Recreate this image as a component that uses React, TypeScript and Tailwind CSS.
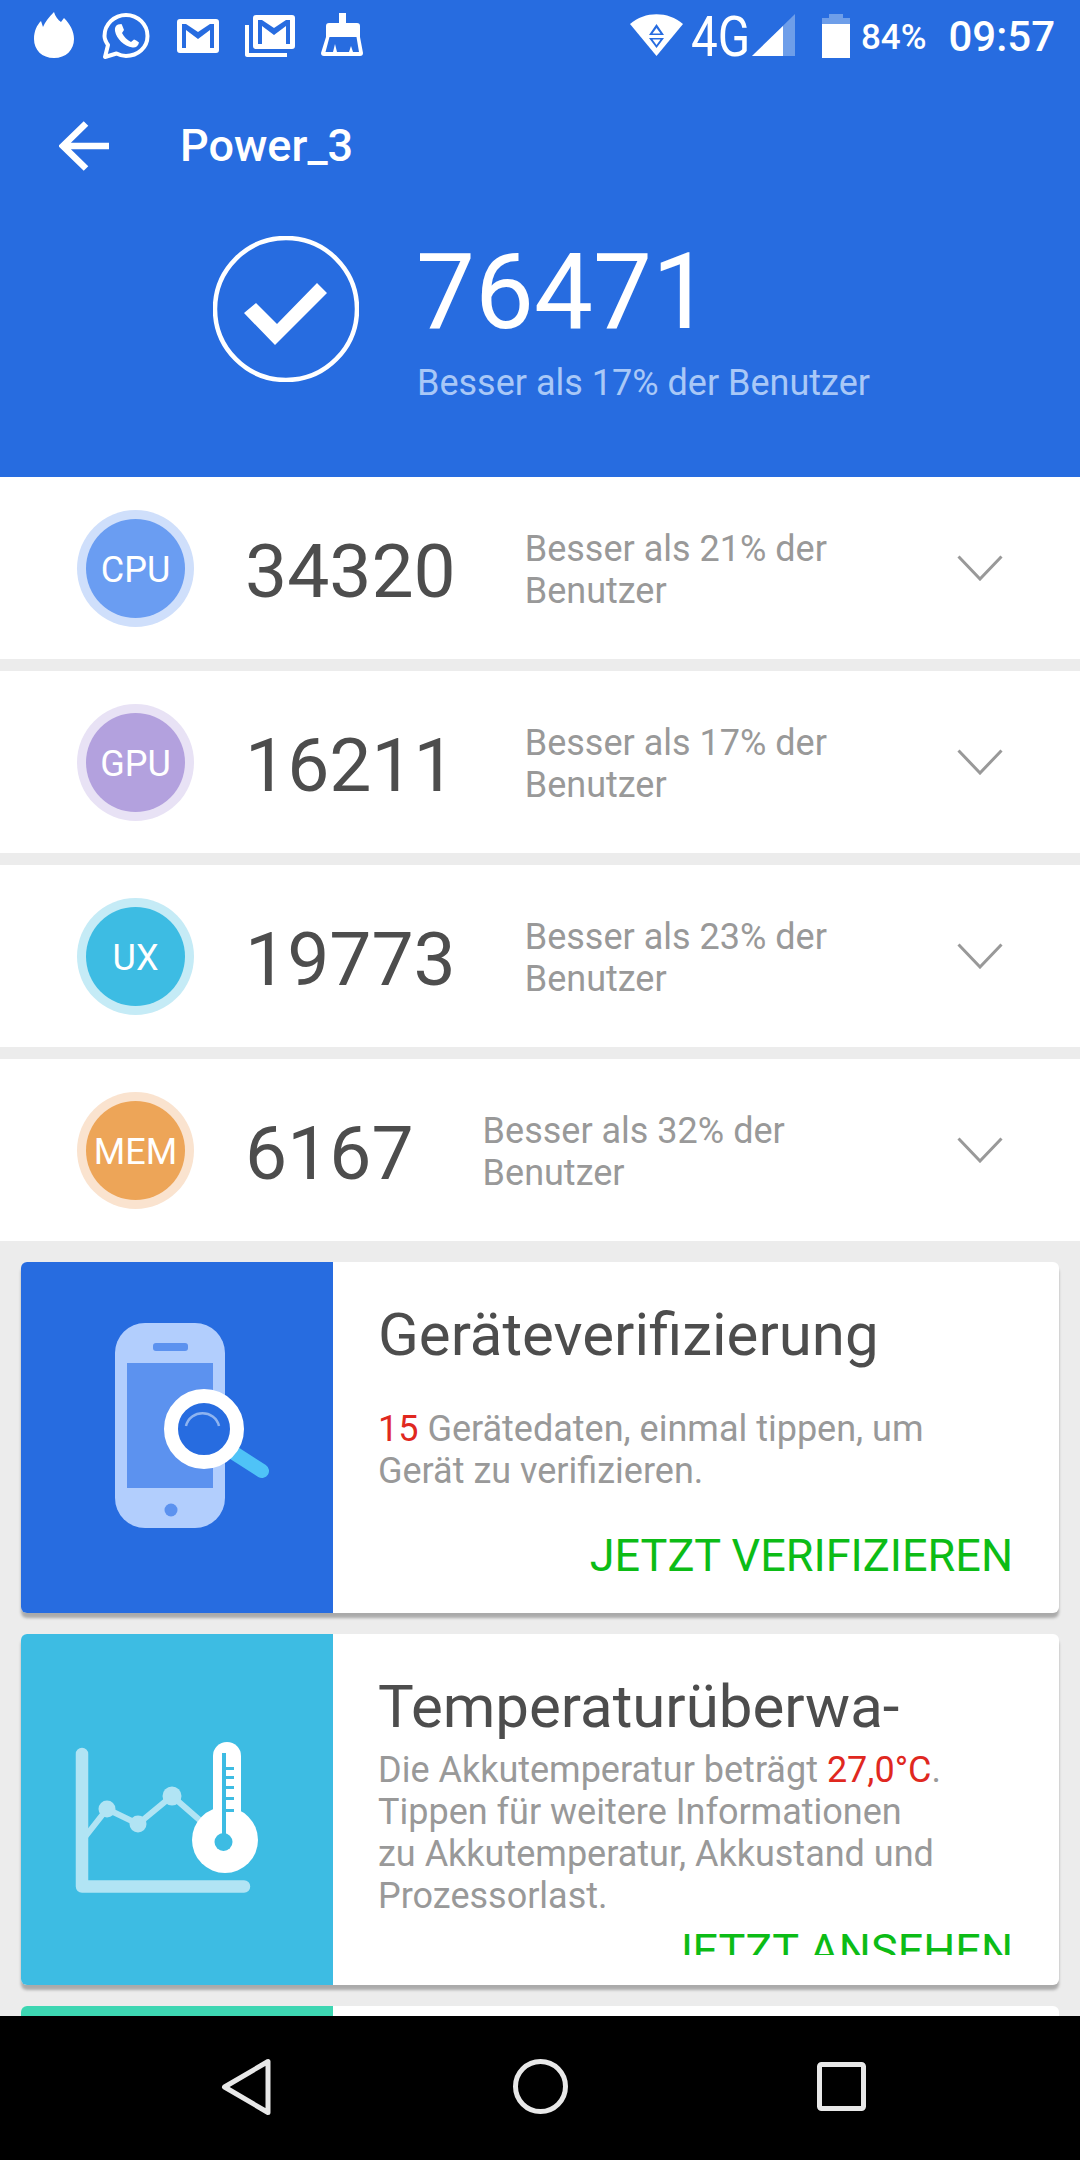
const rows = [
  { label: 'CPU', score: '34320', pct: 21, outer: 'bg-[#cfdffb]', inner: 'bg-[#6a9df2]' },
  { label: 'GPU', score: '16211', pct: 17, outer: 'bg-[#e8e2f5]', inner: 'bg-[#b3a1de]' },
  { label: 'UX', score: '19773', pct: 23, outer: 'bg-[#c5ebf6]', inner: 'bg-[#3dbce3]' },
  { label: 'MEM', score: '6167', pct: 32, outer: 'bg-[#fae3cf]', inner: 'bg-[#eda558]' },
]

function Flame() {
  return (
    <svg width="40" height="46" viewBox="0 0 40 46" fill="white">
      <path d="M20 46C8 46 0 38 0 27C0 19 3 13 7 9L9 15C11 10 15 5 20 0C21 4 24 8 27 10L30 6C36 12 40 19 40 27C40 38 32 46 20 46Z" />
    </svg>
  )
}

function Whatsapp() {
  return (
    <svg width="48" height="48" viewBox="0 0 48 48" fill="none">
      <path d="M3 45L6 33C3.800 29.800 2.500 27 2.500 24C2.500 12.500 12 3 24 3C36 3 45.500 12.500 45.500 24C45.500 35.500 36 44 24 44C20.500 44 17.500 43 14.500 41.500Z" stroke="white" strokeWidth="4" strokeLinejoin="round" />
      <path d="M16 12.500L19.500 12C20.500 14 21.500 16.500 22 18L20 21C22 25 25 28 29 30L32 27.500C33.500 28 36 29.500 37 30.500C36.500 34 33.500 36 30.500 35.500C22 34 14.500 27 13 19C12.500 16 13.500 13.500 16 12.500Z" fill="white" />
    </svg>
  )
}

function Gmail() {
  return (
    <svg width="42" height="34" viewBox="0 0 42 34" fill="white">
      <path fillRule="evenodd" d="M3 0H39C41 0 42 1 42 3V31C42 33 41 34 39 34H3C1 34 0 33 0 31V3C0 1 1 0 3 0ZM5 5V29H9V11L21 20L33 11V29H37V5H33L21 13L9 5Z" />
    </svg>
  )
}

function GmailStack() {
  return (
    <svg width="50" height="42" viewBox="0 0 50 42" fill="white">
      <path fillRule="evenodd" d="M11 0H47C49 0 50 1 50 3V31C50 33 49 34 47 34H11C9 34 8 33 8 31V3C8 1 9 0 11 0ZM13 5V29H17V11L29 20L41 11V29H45V5H41L29 13L17 5Z" />
      <path d="M0 10H4V38H42V42H2C1 42 0 41 0 40Z" />
    </svg>
  )
}

function Broom() {
  return (
    <svg width="42" height="43" viewBox="0 0 42 43" fill="white">
      <path d="M18 0H25V10H36C38 10 39 11 39 13V24L42 40C42 42 41 43 39 43H3C1 43 0 42 0 40L5 24V13C5 11 6 10 8 10H18Z" />
      <path d="M8.500 24H35.500L38 39H32L30 33L28 39H16L14 31L12 39H4.500Z" fill="#276ce0" />
    </svg>
  )
}

function Wifi() {
  return (
    <svg width="53" height="42" viewBox="0 0 53 42" fill="white">
      <path d="M0 10C15 -3 38 -3 53 10L26.500 42Z" />
      <path d="M26.500 10L34 21H19Z M19 24H34L26.500 34Z" fill="#276ce0" />
      <path d="M26.500 14L30.500 19.500H22.500Z M22.500 25.500H30.500L26.500 31Z" fill="white" />
    </svg>
  )
}

function Signal() {
  return (
    <svg width="43" height="42" viewBox="0 0 43 42">
      <path d="M0 42L43 0V42Z" fill="#6e9ee9" />
      <path d="M0 42L31 12V42Z" fill="white" />
    </svg>
  )
}

function Battery() {
  return (
    <svg width="28" height="44" viewBox="0 0 28 44">
      <path d="M7 0H21V4H28V14H0V4H7Z" fill="#6e9ee9" />
      <rect y="10" width="28" height="34" fill="white" />
    </svg>
  )
}

function Chevron() {
  return (
    <svg width="46" height="26" viewBox="0 0 46 26" fill="none">
      <path d="M1.500 1.500L23 24L44.500 1.500" stroke="#999999" strokeWidth="3" />
    </svg>
  )
}

function PhoneArt() {
  return (
    <svg width="312" height="351" viewBox="0 0 312 351" fill="none">
      <rect x="94" y="61" width="110" height="205" rx="30" fill="#b2cefd" />
      <rect x="106" y="101" width="86" height="125" fill="#5c92ef" />
      <rect x="132" y="81" width="35" height="8" rx="3" fill="#5c92ef" />
      <circle cx="150" cy="248" r="6.500" fill="#5c92ef" />
      <path d="M213 191L241 209" stroke="#4fc3f7" strokeWidth="14" strokeLinecap="round" />
      <circle cx="183" cy="167" r="33" fill="#276ce0" stroke="white" strokeWidth="14" />
      <path d="M165 164C169 147 194 147 198 164" stroke="#8fb4f0" strokeWidth="2.500" />
    </svg>
  )
}

function ThermoArt() {
  return (
    <svg width="312" height="351" viewBox="0 0 312 351" fill="none">
      <path d="M61 120V252.500H223" stroke="#b1e4f4" strokeWidth="12.500" strokeLinecap="round" strokeLinejoin="round" />
      <path d="M64 203L86 175L117 190L151 162L182 189" stroke="#b1e4f4" strokeWidth="6" />
      <circle cx="86" cy="175" r="8.500" fill="#b1e4f4" />
      <circle cx="117" cy="190" r="8.500" fill="#b1e4f4" />
      <circle cx="151" cy="162" r="9.500" fill="#b1e4f4" />
      <rect x="192" y="108" width="28" height="100" rx="14" fill="white" />
      <circle cx="204" cy="206" r="33" fill="white" />
      <rect x="201" y="119" width="4" height="85" fill="#3dbce3" />
      <circle cx="202.500" cy="208" r="9" fill="#3dbce3" />
      <path d="M205 133H213V136H205Z M205 142H213V145H205Z M205 152H213V155H205Z M205 163H213V166H205Z M205 175H213V178H205Z" fill="#3dbce3" />
    </svg>
  )
}

export default function App() {
  return (
    <div className="flex h-[2160px] w-[1080px] flex-col overflow-hidden bg-[#ececec] font-['Roboto',sans-serif]">
      <div className="h-[2016px] shrink-0 overflow-hidden">
        {/* header */}
        <div className="h-[477px] bg-[#276ce0] text-white">
          <div className="flex h-[72px] items-start justify-between pl-[34px] pr-[25px] pt-[12px]">
            <div className="flex items-start">
              <Flame />
              <div className="ml-[28px]"><Whatsapp /></div>
              <div className="ml-[27px] mt-[7px]"><Gmail /></div>
              <div className="ml-[26px] mt-[3px]"><GmailStack /></div>
              <div className="ml-[26px] mt-[1px]"><Broom /></div>
            </div>
            <div className="flex items-start">
              <div className="mt-[2px]"><Wifi /></div>
              <span className="ml-[8px] mt-[-8px] w-[58px] origin-left scale-x-[0.85] text-[56px] leading-[66px]">4G</span>
              <div className="ml-[3px] mt-[2px]"><Signal /></div>
              <div className="ml-[27px] mt-[2px]"><Battery /></div>
              <span className="ml-[11px] mt-[5px] text-[35px] leading-[42px] font-medium">84%</span>
              <span className="ml-[22px] mt-[1px] text-[42px] leading-[48px] font-medium">09:57</span>
            </div>
          </div>
          <div className="flex h-[148px] items-center pl-[59px]">
            <svg width="50" height="50" viewBox="0 0 50 50" fill="none">
              <path d="M50 25H6M27 2.500L4 25L27 47.500" stroke="white" strokeWidth="6.500" />
            </svg>
            <span className="ml-[71px] text-[45px] leading-[50px] font-medium">Power_3</span>
          </div>
          <div className="flex pl-[213px] pt-[16px]">
            <div className="h-[146px] w-[146px] shrink-0">
              <svg width="146" height="146" viewBox="0 0 146 146" fill="none">
                <circle cx="73" cy="73" r="71" stroke="white" strokeWidth="4.500" />
                <path d="M31 77L43 67L64 88L104 47L114 57L62 109Z" fill="white" />
              </svg>
            </div>
            <div className="ml-[57px] flex flex-col">
              <span className="text-[105px] leading-[114px]">76471</span>
              <span className="ml-[1px] mt-[12px] text-[36px] leading-[42px] text-[#a9c8f7]">Besser als 17% der Benutzer</span>
            </div>
          </div>
        </div>

        {/* score rows */}
        <div className="flex flex-col gap-[12px]">
          {rows.map((r) => (
            <div key={r.label} className="flex h-[182px] items-center bg-white pl-[77px] pr-[77px]">
              <div className={`flex h-[117px] w-[117px] shrink-0 items-center justify-center rounded-full ${r.outer}`}>
                <div className={`flex h-[99px] w-[99px] items-center justify-center rounded-full pt-[3px] text-[36px] text-white ${r.inner}`}>
                  {r.label}
                </div>
              </div>
              <span className="ml-[51px] pt-[6px] text-[75px] leading-[86px] text-[#4d4d4d]">{r.score}</span>
              <div className="ml-[69px] pt-[3px] text-[36px] leading-[42px] text-[#999999]">
                Besser als {r.pct}% der<br />Benutzer
              </div>
              <div className="ml-auto"><Chevron /></div>
            </div>
          ))}
        </div>

        {/* cards */}
        <div className="flex flex-col gap-[21px] px-[21px] pt-[21px]">
          <div className="flex h-[351px] overflow-hidden rounded-[6px] bg-white shadow-[0_5px_3px_rgba(0,0,0,0.28)]">
            <div className="w-[312px] shrink-0 bg-[#276ce0]"><PhoneArt /></div>
            <div className="flex-1 pl-[45px] pr-[46px]">
              <div className="mt-[38px] text-[60px] leading-[70px] text-[#4d4d4d]">Geräteverifizierung</div>
              <div className="mt-[38px] text-[36px] leading-[42px] text-[#999999]">
                <span className="text-[#e0281f]">15</span> Gerätedaten, einmal tippen, um<br />Gerät zu verifizieren.
              </div>
              <div className="mt-[38px] text-right text-[45px] leading-[52px] text-[#0cbc16]">JETZT VERIFIZIEREN</div>
            </div>
          </div>

          <div className="flex h-[351px] overflow-hidden rounded-[6px] bg-white shadow-[0_5px_3px_rgba(0,0,0,0.28)]">
            <div className="w-[312px] shrink-0 bg-[#3dbce3]"><ThermoArt /></div>
            <div className="flex-1 pl-[45px] pr-[46px]">
              <div className="mt-[38px] text-[60px] leading-[70px] text-[#4d4d4d]">Temperaturüberwa-</div>
              <div className="mt-[7px] text-[36px] leading-[42px] text-[#999999]">
                Die Akkutemperatur beträgt <span className="text-[#e0281f]">27,0°C</span>.<br />
                Tippen für weitere Informationen<br />
                zu Akkutemperatur, Akkustand und<br />
                Prozessorlast.
              </div>
              <div className="h-[38px] overflow-hidden text-right text-[45px] leading-[52px] text-[#0cbc16]">
                <div className="mt-[8px]">JETZT ANSEHEN</div>
              </div>
            </div>
          </div>

          <div className="flex h-[351px] overflow-hidden rounded-[6px] bg-white">
            <div className="w-[312px] shrink-0 bg-[#3dd6b2]" />
          </div>
        </div>
      </div>

      {/* nav bar */}
      <div className="flex h-[144px] shrink-0 items-center bg-black pl-[221px] pb-[3px]">
        <svg width="50" height="58" viewBox="0 0 50 58" fill="none">
          <path d="M47 3.500V54.500L3.500 29Z" stroke="#e8e8e8" strokeWidth="5" strokeLinejoin="round" />
        </svg>
        <svg className="ml-[242px]" width="55" height="55" viewBox="0 0 55 55" fill="none">
          <circle cx="27.500" cy="27.500" r="25" stroke="#e8e8e8" strokeWidth="5" />
        </svg>
        <svg className="ml-[249px]" width="49" height="49" viewBox="0 0 49 49" fill="none">
          <rect x="2.500" y="2.500" width="44" height="44" rx="2" stroke="#e8e8e8" strokeWidth="5" />
        </svg>
      </div>
    </div>
  )
}
